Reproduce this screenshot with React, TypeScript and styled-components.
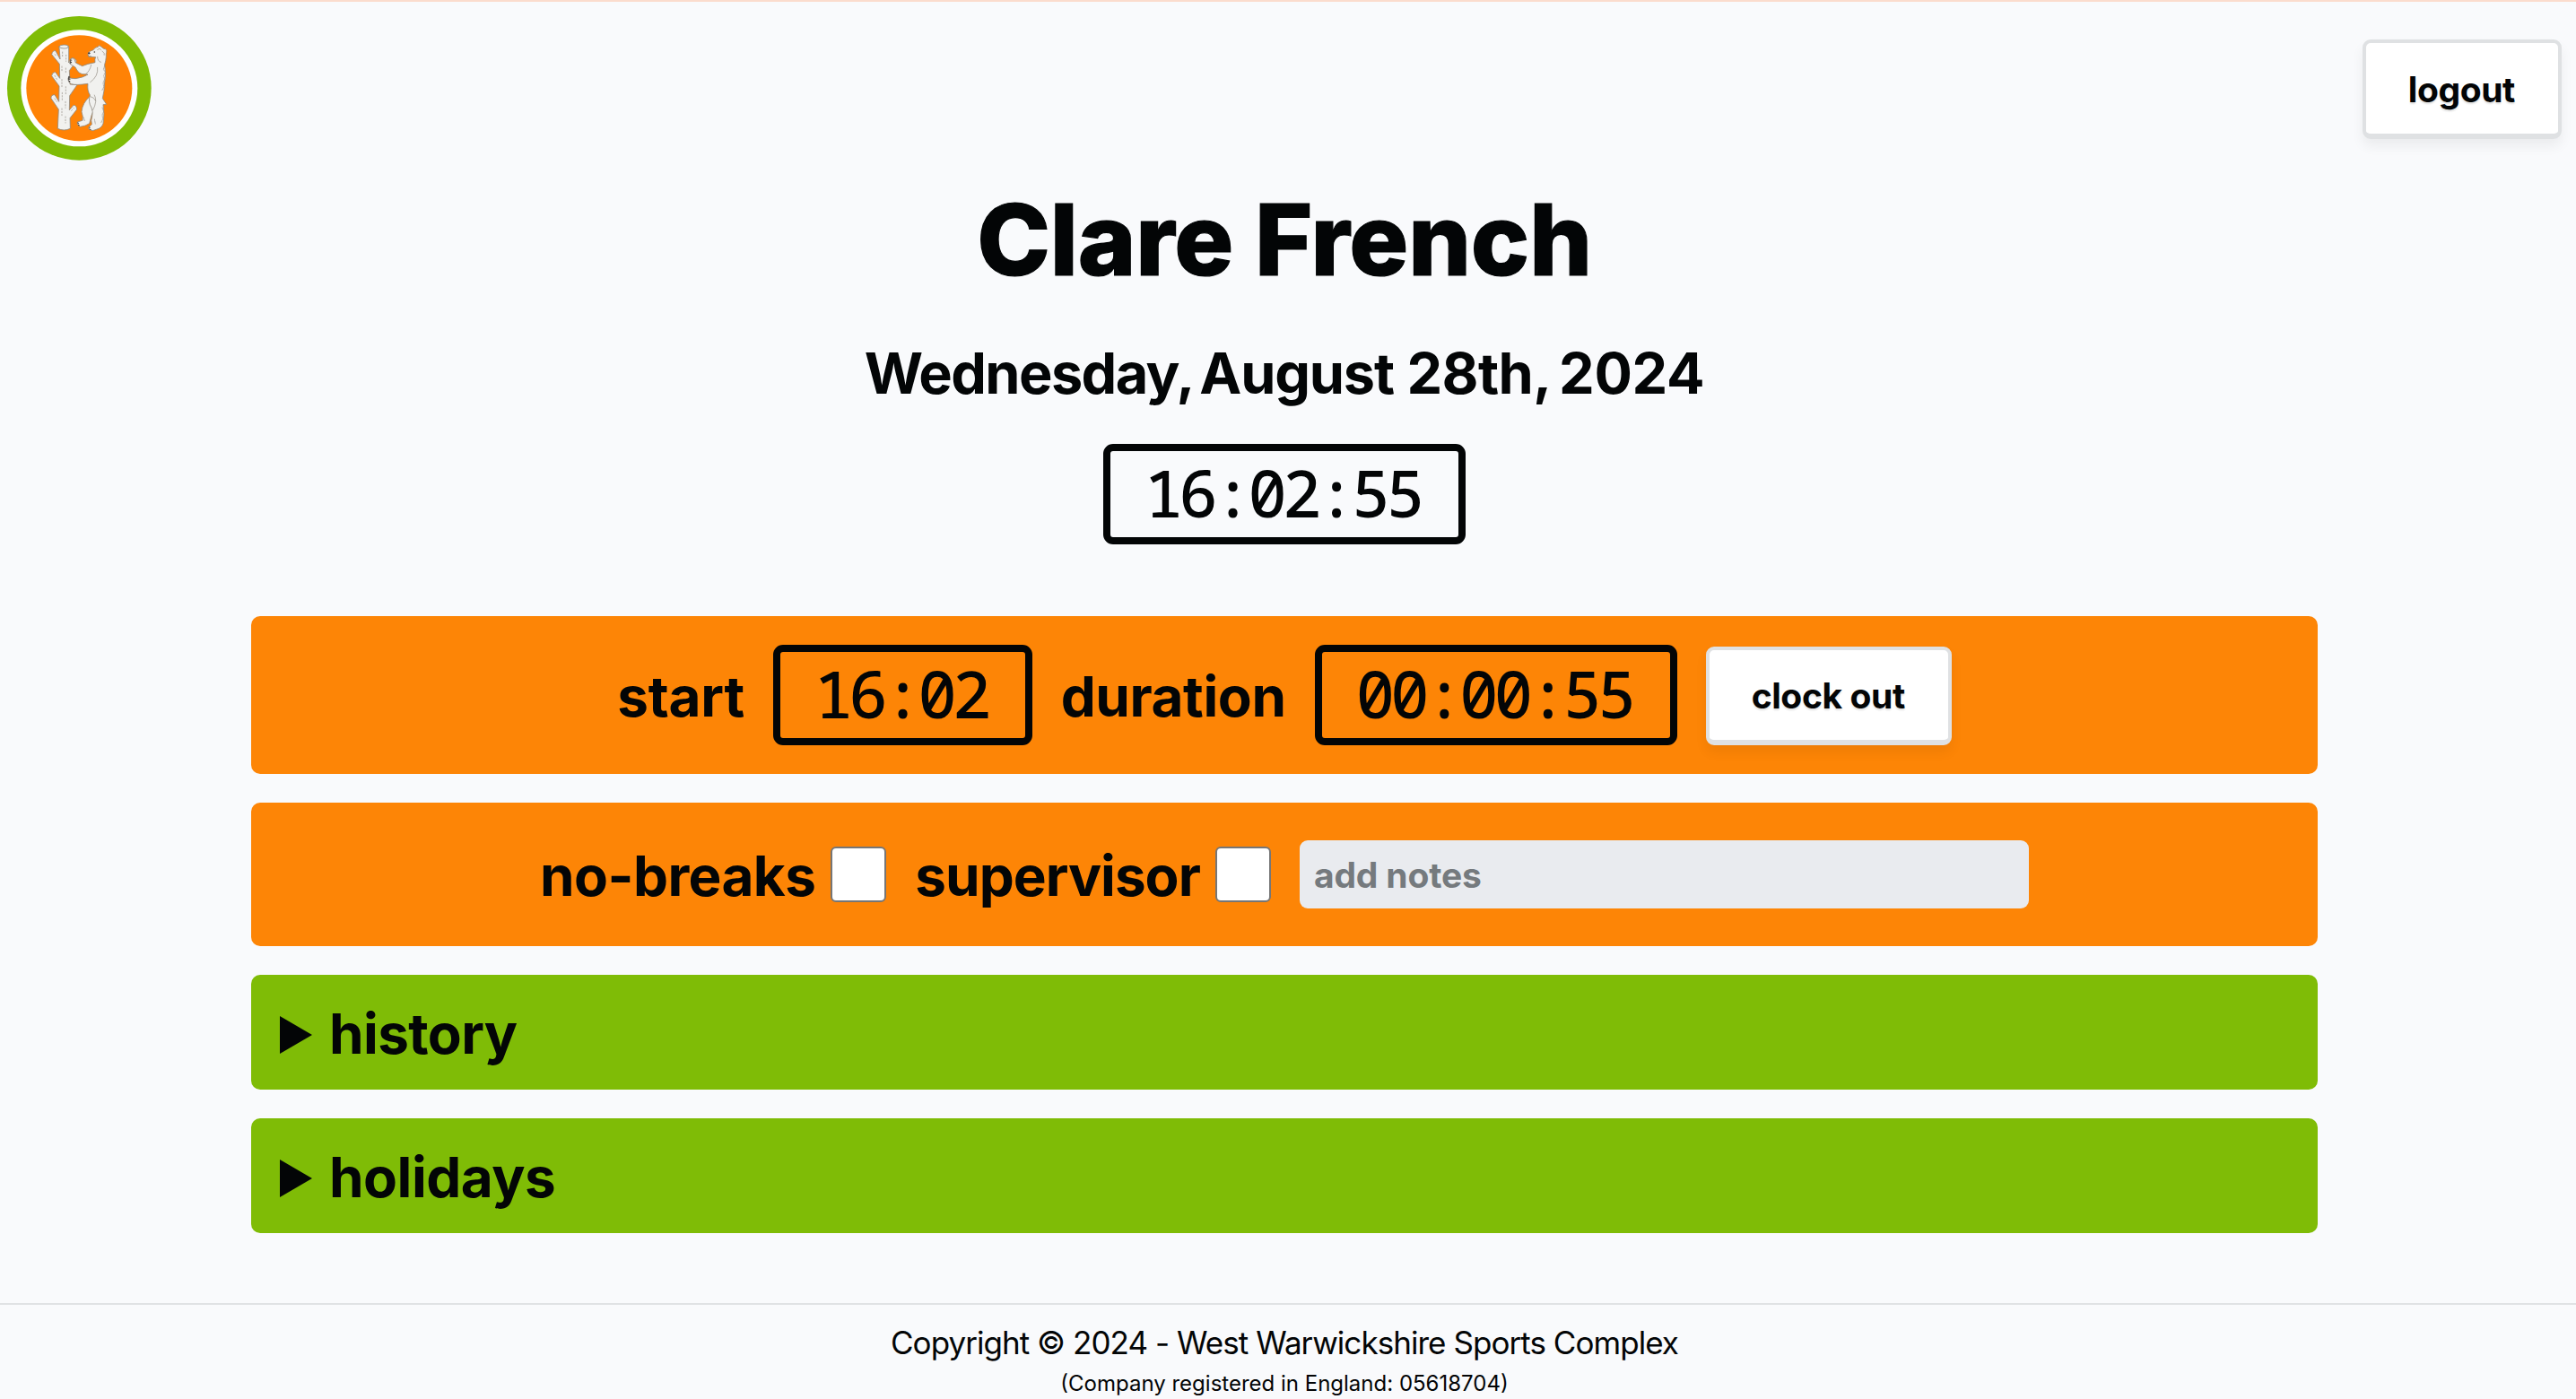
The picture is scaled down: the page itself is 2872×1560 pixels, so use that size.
import React from 'react';
import styled, { createGlobalStyle } from 'styled-components';

const GlobalStyle = createGlobalStyle`
  *, *::before, *::after { box-sizing: border-box; }
  body {
    margin: 0;
    background: #f9fafc;
    color: #030506;
    font-family: Inter, 'Liberation Sans', sans-serif;
    overflow: hidden;
  }
`;

const Page = styled.div`
  height: 1560px;
  display: flex;
  flex-direction: column;
  border-top: 2px solid #fbdccd;
`;

const Header = styled.header`
  height: 201px;
  width: 2864px;
  padding: 0 8px 0 0;
  display: flex;
  justify-content: space-between;
  align-items: flex-start;
`;

const LogoArt = styled.svg`
  width: 190px;
  height: 190px;
  margin-top: -2px;
`;

const Button = styled.button<{ $top: number; $height: number; $drop?: number }>`
  margin: ${(p) => p.$top}px 0 0;
  height: ${(p) => p.$height}px;
  padding: ${(p) => p.$drop ?? 0}px 48px 0 47px;
  border: 4px solid #dfe1e3;
  border-bottom-width: 6px;
  border-radius: 9px;
  background: #fff;
  color: inherit;
  font: 700 39px Inter, 'Liberation Sans', sans-serif;
  letter-spacing: -0.4px;
  text-shadow: 0 2px 2px rgba(0, 0, 0, 0.12);
  box-shadow: 0 8px 14px rgba(0, 0, 0, 0.06);
`;

const Main = styled.main`
  width: 2864px;
  padding: 0 280px;
  display: flex;
  flex-direction: column;
  align-items: center;
`;

const Name = styled.h1`
  margin: 0;
  font-size: 110px;
  font-weight: 800;
  line-height: 128px;
  letter-spacing: -0.2px;
  -webkit-text-stroke: 1.2px #030506;
`;

const Today = styled.h2`
  margin: 45px 0 39px;
  font-size: 63px;
  font-weight: 700;
  line-height: 80px;
`;

const Word = styled.span<{ $tracking: number; $space?: number }>`
  letter-spacing: ${(p) => p.$tracking}px;
  word-spacing: ${(p) => p.$space ?? 0}px;
`;

const Clock = styled.time`
  height: 112px;
  padding: 0 42px 4px 38px;
  display: flex;
  align-items: center;
  border: 8px solid #030506;
  border-radius: 11px;
  font: 500 72px 'Noto Sans Mono', 'DejaVu Sans Mono', monospace;
  letter-spacing: -4.7px;
`;

const Panels = styled.div`
  align-self: stretch;
  margin-top: 80px;
  display: flex;
  flex-direction: column;
  gap: 32px;
`;

const Panel = styled.section<{ $height: number }>`
  height: ${(p) => p.$height}px;
  display: flex;
  align-items: center;
  justify-content: center;
  gap: 32px;
  border-radius: 10px;
  background: #fd8506;
`;

const Label = styled.span<{ $tracking?: number }>`
  padding-top: 3px;
  font-size: 62px;
  font-weight: 700;
  letter-spacing: ${(p) => p.$tracking ?? -0.4}px;
`;

const Option = styled.label`
  display: flex;
  align-items: center;
  gap: 17px;
`;

const Checkbox = styled.input.attrs({ type: 'checkbox' })`
  appearance: none;
  margin: 0;
  width: 62px;
  height: 62px;
  border: 2px solid #767676;
  border-radius: 6px;
  background: #fff;
`;

const Notes = styled.input`
  width: 813px;
  height: 76px;
  padding: 0 16px;
  border: 0;
  border-radius: 9px;
  background: #e9ebef;
  font: 700 39px Inter, 'Liberation Sans', sans-serif;
  letter-spacing: -0.15px;
  &::placeholder { color: #757a7e; opacity: 1; }
`;

const Drawer = styled.section`
  height: 128px;
  padding-left: 32px;
  display: flex;
  align-items: center;
  gap: 19px;
  border-radius: 10px;
  background: #7fbc06;
`;

const Marker = styled.span`
  margin-top: 6px;
  border-style: solid;
  border-width: 21px 0 21px 36px;
  border-color: transparent transparent transparent #030506;
`;

const Footer = styled.footer`
  margin-top: 78px;
  padding: 18px 8px 0 0;
  border-top: 2px solid #e0e2e4;
  text-align: center;
`;

const Copyright = styled.p`
  margin: 0;
  font-size: 35px;
  line-height: 48px;
  letter-spacing: -0.95px;
`;

const Registration = styled.p`
  margin: 5px 0 0;
  font-size: 24px;
  line-height: 34px;
`;

function Logo() {
  return (
    <LogoArt viewBox="0 0 570 570" role="img" aria-label="West Warwickshire Sports Complex">
      <circle cx="265" cy="295" r="241" fill="#7fbc06" />
      <circle cx="265" cy="295" r="195" fill="#fff" />
      <circle cx="265" cy="295" r="177" fill="#ff8205" />
      <g fill="#f1f1ef" stroke="#8f8a82" strokeWidth="2.5" strokeLinejoin="round" strokeLinecap="round">
        <path d="M198 156 L201 198 L186 170 Q176 168 173 182 L199 214 L200 262 L185 241 Q174 242 173 254 L198 288 L197 340 L183 317 Q170 317 171 329 L196 366 L193 430 Q214 440 235 430 L234 395 L257 366 Q256 352 246 352 L232 368 L233 320 L258 284 L234 282 L232 236 L256 204 Q248 190 236 197 L230 210 L230 156 Q214 146 198 156Z" />
        <ellipse cx="214" cy="156" rx="15" ry="6" />
        <path d="M301 322 Q275 345 273 374 Q279 390 276 403 L259 408 Q255 416 268 424 Q286 422 299 413 Q304 385 318 360Z" />
        <path d="M294 181 Q296 171 311 168 Q319 157 328 157 Q330 148 338 156 L347 163 Q359 164 356 175 Q354 180 355 190 Q354 204 350 216 Q356 248 350 276 Q349 306 343 329 L356 349 L345 350 Q350 382 346 405 Q346 422 331 430 L310 437 Q293 433 297 425 L307 416 Q303 403 308 390 Q312 372 306 360 Q294 342 301 318 Q291 303 294 280 Q255 286 239 281 Q226 274 228 260 Q238 262 252 263 Q278 260 294 249 L286 248 Q264 252 252 225 L233 213 Q232 197 243 194 Q251 197 253 210 L275 221 Q292 213 318 209 Q316 197 320 191 L298 190Z" />
      </g>
      <g fill="none" stroke="#99948c" strokeWidth="2.2" strokeLinecap="round">
        <path d="M305 217 Q300 240 286 248 M326 226 Q330 255 302 275 M316 318 Q327 338 311 368 M303 323 Q315 325 320 337 M295 187 L305 188 M326 166 Q334 158 338 166 M342 171 Q352 178 349 184 M326 190 Q326 205 337 208" />
        <path d="M209 174 V194 M221 184 V205 M207 222 V240 M220 228 V246 M207 266 V290 M220 290 V315 M208 310 V336 M219 340 V361 M207 363 V386 M219 390 V411 M184 182 L190 190 M183 253 L190 265 M183 330 L190 340 M239 370 L247 361" strokeDasharray="4 6" />
        <path d="M350 220 L346 232 L352 241 L347 253 L350 265 L345 277 L347 291 L341 303 M342 360 L347 373 L342 384 L344 398 L338 411 M280 393 L283 405 M316 399 L319 414" strokeDasharray="4 3" />
      </g>
      <g fill="#403c38">
        <circle cx="298" cy="178" r="3.5" />
        <circle cx="316" cy="174" r="2.5" />
        <path d="M229 254 L236 258 L230 261 L237 265 L229 268 L236 272 L231 276 L228 265Z M235 199 L242 201 L236 204 L241 209 L234 213Z M259 409 L265 412 L260 415 L268 419 L262 421Z M297 424 L303 427 L298 430 L306 434 L300 434Z" />
      </g>
    </LogoArt>
  );
}

export default function App() {
  return (
    <>
      <GlobalStyle />
      <Page>
        <Header>
          <Logo />
          <Button $top={42} $height={111} $drop={2}>logout</Button>
        </Header>
        <Main>
          <Name>Clare French</Name>
          <Today>
            <Word $tracking={-1.6} $space={-5}>Wednesday, </Word>
            <Word $tracking={-1.2} $space={1}>August </Word>
            <Word $tracking={-0.6} $space={-4}>28th, </Word>
            <Word $tracking={-0.3}>2024</Word>
          </Today>
          <Clock>16:02:55</Clock>
          <Panels>
            <Panel $height={176}>
              <Label $tracking={-0.2}>start</Label>
              <Clock>16:02</Clock>
              <Label>duration</Label>
              <Clock>00:00:55</Clock>
              <Button $top={2} $height={110}>clock out</Button>
            </Panel>
            <Panel $height={160}>
              <Option>
                <Label $tracking={-0.6}>no-breaks</Label>
                <Checkbox />
              </Option>
              <Option>
                <Label $tracking={-1}>supervisor</Label>
                <Checkbox />
              </Option>
              <Notes placeholder="add notes" />
            </Panel>
            <Drawer>
              <Marker />
              <Label $tracking={-0.6}>history</Label>
            </Drawer>
            <Drawer>
              <Marker />
              <Label $tracking={-0.5}>holidays</Label>
            </Drawer>
          </Panels>
        </Main>
        <Footer>
          <Copyright>Copyright © 2024 - West Warwickshire Sports Complex</Copyright>
          <Registration>(Company registered in England: 05618704)</Registration>
        </Footer>
      </Page>
    </>
  );
}
